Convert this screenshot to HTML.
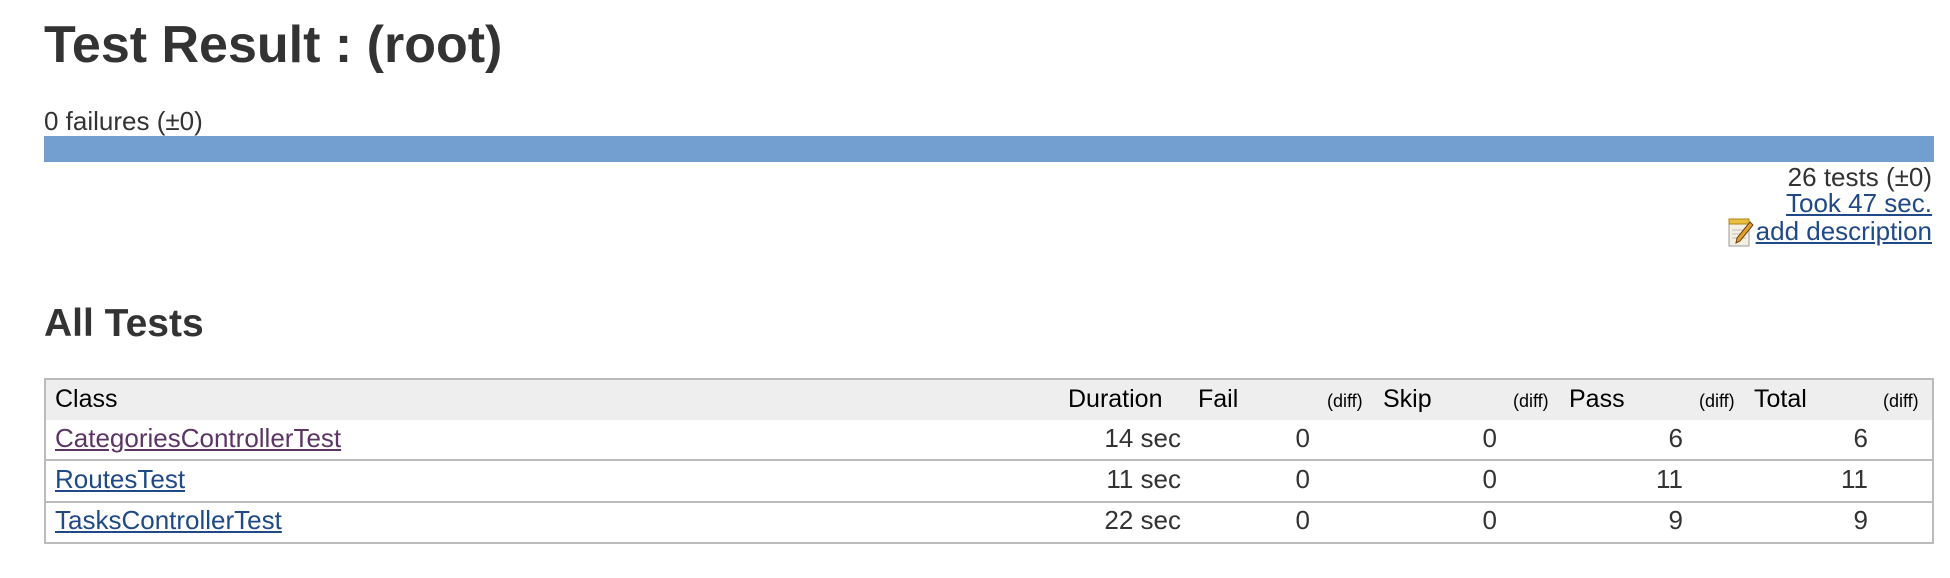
<!DOCTYPE html>
<html><head><meta charset="utf-8"><style>
body{margin:0;width:1950px;height:578px;background:#fff;position:relative;font-family:"Liberation Sans",Arial,sans-serif;color:#333;overflow:hidden}
.a{position:absolute;line-height:1;white-space:nowrap}
.r{text-align:right}
a{color:#204a87;text-decoration:underline}
.v{color:#5c3566}
.h{color:#000}
</style></head><body>
<div class="a" style="left:44px;top:19px;font-size:52px;font-weight:bold">Test Result : (root)</div>
<div class="a" style="left:44px;top:108px;font-size:26px">0 failures (±0)</div>
<div style="position:absolute;left:44px;top:136px;width:1890px;height:26px;background:#729fcf"></div>
<div class="a r" style="right:18px;top:164px;font-size:26px">26 tests (±0)</div>
<div class="a r" style="right:18px;top:190px;font-size:26px"><a>Took 47 sec.</a></div>
<div class="a r" style="right:18px;top:218px;font-size:26px"><a>add description</a></div>
<svg style="position:absolute;left:1728px;top:217px" width="26" height="30" viewBox="0 0 26 30">
<rect x="1" y="4" width="20" height="25" fill="#f4f0e0" stroke="#999"/>
<rect x="1" y="2" width="20" height="5" fill="#e8c040" stroke="#b08020"/>
<line x1="4" y1="13" x2="18" y2="13" stroke="#bbb"/><line x1="4" y1="17" x2="18" y2="17" stroke="#bbb"/><line x1="4" y1="21" x2="18" y2="21" stroke="#bbb"/>
<path d="M22 5 L25 8 L12 24 L8 26 L9 21 Z" fill="#e0a030" stroke="#704010" stroke-width="1"/>
</svg>
<div class="a" style="left:44px;top:304px;font-size:39px;font-weight:bold">All Tests</div>

<div style="position:absolute;left:44px;top:378px;width:1886px;height:162px;border:2px solid #bbb"></div>
<div style="position:absolute;left:46px;top:380px;width:1886px;height:40px;background:#eee"></div>
<div style="position:absolute;left:46px;top:459px;width:1886px;height:2px;background:#bbb"></div>
<div style="position:absolute;left:46px;top:501px;width:1886px;height:2px;background:#bbb"></div>

<div class="a h" style="left:55px;top:387px;font-size:25px">Class</div>
<div class="a h" style="left:1068px;top:387px;font-size:25px">Duration</div>
<div class="a h" style="left:1198px;top:387px;font-size:25px">Fail</div>
<div class="a h" style="left:1327px;top:392px;font-size:18px">(diff)</div>
<div class="a h" style="left:1383px;top:387px;font-size:25px">Skip</div>
<div class="a h" style="left:1513px;top:392px;font-size:18px">(diff)</div>
<div class="a h" style="left:1569px;top:387px;font-size:25px">Pass</div>
<div class="a h" style="left:1699px;top:392px;font-size:18px">(diff)</div>
<div class="a h" style="left:1754px;top:387px;font-size:25px">Total</div>
<div class="a h" style="left:1883px;top:392px;font-size:18px">(diff)</div>

<div class="a" style="left:55px;top:425px;font-size:26px"><a class="v">CategoriesControllerTest</a></div>
<div class="a" style="left:55px;top:466px;font-size:26px"><a>RoutesTest</a></div>
<div class="a" style="left:55px;top:507px;font-size:26px"><a>TasksControllerTest</a></div>

<div class="a r" style="right:769px;top:425px;font-size:26px">14 sec</div>
<div class="a r" style="right:769px;top:466px;font-size:26px">11 sec</div>
<div class="a r" style="right:769px;top:507px;font-size:26px">22 sec</div>

<div class="a r" style="right:640px;top:425px;font-size:26px">0</div>
<div class="a r" style="right:640px;top:466px;font-size:26px">0</div>
<div class="a r" style="right:640px;top:507px;font-size:26px">0</div>

<div class="a r" style="right:453px;top:425px;font-size:26px">0</div>
<div class="a r" style="right:453px;top:466px;font-size:26px">0</div>
<div class="a r" style="right:453px;top:507px;font-size:26px">0</div>

<div class="a r" style="right:267px;top:425px;font-size:26px">6</div>
<div class="a r" style="right:267px;top:466px;font-size:26px">11</div>
<div class="a r" style="right:267px;top:507px;font-size:26px">9</div>

<div class="a r" style="right:82px;top:425px;font-size:26px">6</div>
<div class="a r" style="right:82px;top:466px;font-size:26px">11</div>
<div class="a r" style="right:82px;top:507px;font-size:26px">9</div>
</body></html>
